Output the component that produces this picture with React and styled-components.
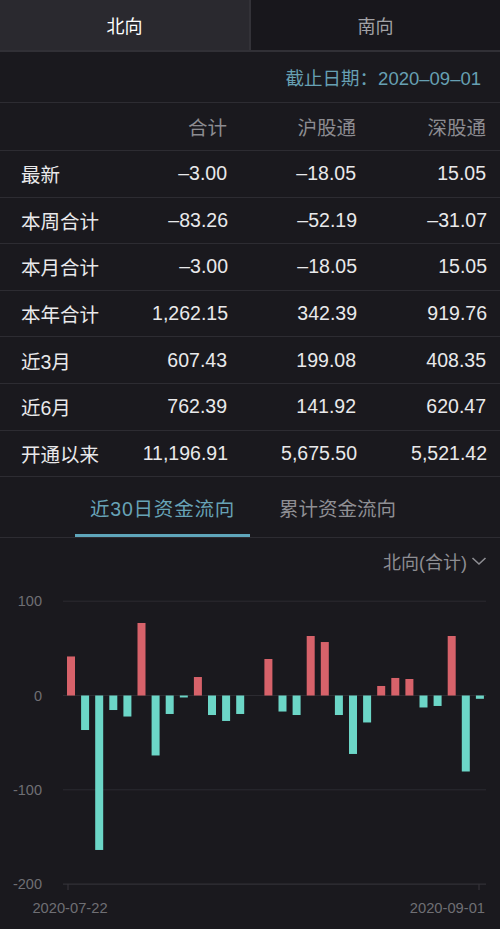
import React from "react";
import styled, { createGlobalStyle } from "styled-components";

const GlobalStyle = createGlobalStyle`
  html, body { margin: 0; padding: 0; background: #1a191e; }
  body { font-family: "Liberation Sans", "Noto Sans CJK SC", sans-serif; }
  * { box-sizing: border-box; }
`;

const Page = styled.div`
  width: 500px;
  min-height: 929px;
  background: #1a191e;
  color: #e8e8ea;
  font-family: "Liberation Sans", "Noto Sans CJK SC", sans-serif;
  overflow: hidden;
`;

const TopTabs = styled.div`
  display: flex;
  height: 52px;
  border-bottom: 2px solid #313036;
`;

const TopTab = styled.div`
  flex: 1;
  display: flex;
  align-items: center;
  justify-content: center;
  font-size: 18px;
  background: ${(p) => (p.$active ? "#2a292f" : "#18171c")};
  color: ${(p) => (p.$active ? "#ffffff" : "#a2a2a6")};
  border-right: ${(p) => (p.$active ? "2px solid #333238" : "none")};
`;

const DateRow = styled.div`
  display: flex;
  justify-content: flex-end;
  align-items: center;
  height: 51px;
  padding-right: 19px;
  font-size: 18.5px;
  color: #67a0b3;
  border-bottom: 1px solid #2d2c32;
`;

const Row = styled.div`
  display: grid;
  grid-template-columns: 1fr 129px 129px 130px;
  align-items: center;
  height: ${(p) => (p.$header ? "48px" : "46.6px")};
  padding: 0 14px 0 21px;
  font-size: 19.5px;
  color: ${(p) => (p.$header ? "#8c8c91" : "#e9e9eb")};
  border-bottom: 1px solid #2d2c32;
`;

const Cell = styled.div`
  text-align: ${(p) => (p.$left ? "left" : "right")};
  white-space: nowrap;
`;

const SubTabs = styled.div`
  display: flex;
  justify-content: center;
  height: 61px;
  border-bottom: 1px solid #2d2c32;
`;

const SubTab = styled.div`
  width: 175px;
  display: flex;
  align-items: center;
  justify-content: center;
  padding-top: 3px;
  font-size: 19.5px;
  letter-spacing: ${(p) => (p.$active ? "0.8px" : "0")};
  color: ${(p) => (p.$active ? "#67a3b7" : "#8f8f94")};
  border-bottom: 3px solid ${(p) => (p.$active ? "#5fa6bb" : "transparent")};
`;

const ChartHeader = styled.div`
  display: flex;
  justify-content: flex-end;
  align-items: center;
  gap: 4px;
  height: 44px;
  padding: 2px 13px 0 0;
  font-size: 18px;
  color: #8e8e93;
`;

const ChartSvg = styled.svg`
  display: block;
  width: 500px;
  height: 347px;
`;

const rows = [
  ["最新", "–3.00", "–18.05", "15.05"],
  ["本周合计", "–83.26", "–52.19", "–31.07"],
  ["本月合计", "–3.00", "–18.05", "15.05"],
  ["本年合计", "1,262.15", "342.39", "919.76"],
  ["近3月", "607.43", "199.08", "408.35"],
  ["近6月", "762.39", "141.92", "620.47"],
  ["开通以来", "11,196.91", "5,675.50", "5,521.42"],
];

const flows = [
  41.4, -36.6, -163.8, -15.4, -22.3, 76.9, -63.6, -19.6, -2.1, 19.6,
  -20.7, -27, -19.6, 0, 38.7, -17, -20.7, 63.1, 56.7, -20.7,
  -62, -28.6, 10.1, 18.6, 17.5, -12.7, -11.1, 63.1, -80.6, -3.5,
];

const Y0 = 113.5;
const UNIT = 0.943;
const gridVals = [100, 0, -100, -200];

function Chevron() {
  return (
    <svg width="16" height="10" viewBox="0 0 16 10">
      <path d="M1.5 2 L8 8 L14.5 2" fill="none" stroke="#8e8e93" strokeWidth="1.6" />
    </svg>
  );
}

function FlowChart() {
  return (
    <ChartSvg viewBox="0 0 500 347">
      {gridVals.map((v) => {
        const y = Y0 - v * UNIT;
        return (
          <g key={v}>
            <line
              x1="63"
              x2="486"
              y1={y}
              y2={y}
              stroke={v === -200 ? "#38373d" : "#2c2b31"}
              strokeWidth="1"
            />
            <text
              x="42"
              y={y + 5}
              textAnchor="end"
              fontSize="14.5"
              fill="#6f6f74"
              fontFamily="Liberation Sans, sans-serif"
            >
              {v}
            </text>
          </g>
        );
      })}
      <line x1="68" x2="68" y1={Y0 + 200 * UNIT} y2={Y0 + 200 * UNIT + 6} stroke="#38373d" />
      <line x1="479" x2="479" y1={Y0 + 200 * UNIT} y2={Y0 + 200 * UNIT + 6} stroke="#38373d" />
      {flows.map((v, i) => {
        if (v === 0) return null;
        const cx = 71 + i * 14.1;
        const h = Math.abs(v) * UNIT;
        return (
          <rect
            key={i}
            x={cx - 4}
            y={v > 0 ? Y0 - h : Y0}
            width="8"
            height={h}
            fill={v > 0 ? "#d7626a" : "#6cd6c7"}
          />
        );
      })}
      <text x="70" y="331" textAnchor="middle" fontSize="14.7" fill="#6f6f74" fontFamily="Liberation Sans, sans-serif">
        2020-07-22
      </text>
      <text x="485" y="331" textAnchor="end" fontSize="14.7" fill="#6f6f74" fontFamily="Liberation Sans, sans-serif">
        2020-09-01
      </text>
    </ChartSvg>
  );
}

export default function App() {
  return (
    <Page>
      <GlobalStyle />
      <TopTabs>
        <TopTab $active>北向</TopTab>
        <TopTab>南向</TopTab>
      </TopTabs>
      <DateRow>截止日期：2020–09–01</DateRow>
      <Row $header>
        <Cell $left />
        <Cell>合计</Cell>
        <Cell>沪股通</Cell>
        <Cell>深股通</Cell>
      </Row>
      {rows.map((r) => (
        <Row key={r[0]}>
          <Cell $left>{r[0]}</Cell>
          <Cell>{r[1]}</Cell>
          <Cell>{r[2]}</Cell>
          <Cell>{r[3]}</Cell>
        </Row>
      ))}
      <SubTabs>
        <SubTab $active>近30日资金流向</SubTab>
        <SubTab>累计资金流向</SubTab>
      </SubTabs>
      <ChartHeader>
        北向(合计)
        <Chevron />
      </ChartHeader>
      <FlowChart />
    </Page>
  );
}
